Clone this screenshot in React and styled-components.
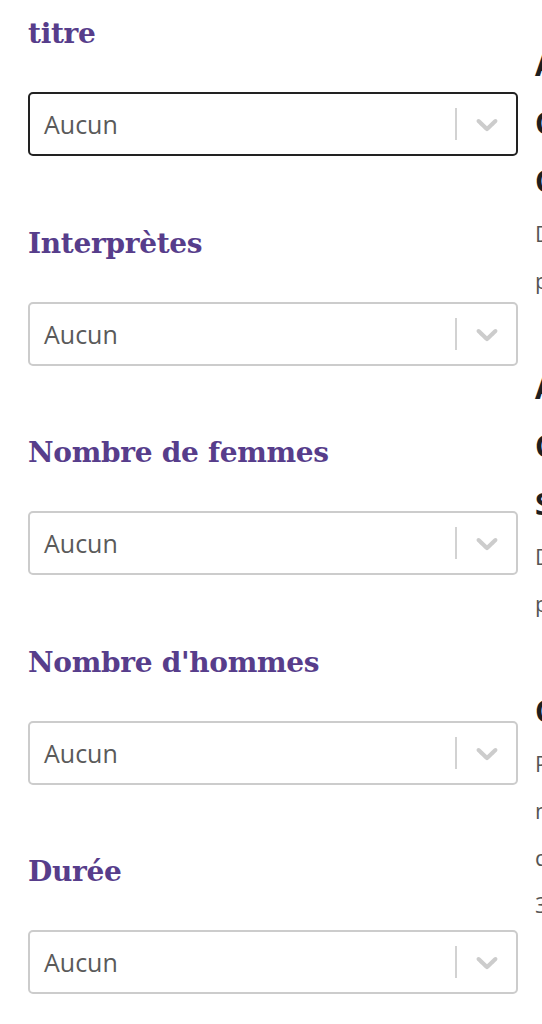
import styled, { createGlobalStyle } from 'styled-components'

const filters = [
	{ id: 'titre', label: 'titre', focused: true },
	{ id: 'interpretes', label: 'Interprètes' },
	{ id: 'femmes', label: 'Nombre de femmes' },
	{ id: 'hommes', label: "Nombre d'hommes" },
	{ id: 'duree', label: 'Durée' },
]

const results = [
	{
		id: 1,
		title: ['Adieu', 'Cendrillon', 'Comédie'],
		text: ['De Jean Dupont', 'pour trois comédiens'],
	},
	{
		id: 2,
		title: ['Appartement', 'Charmant', 'Sans vue'],
		text: ['De Marie Leroy', 'pour deux comédiennes'],
	},
	{
		id: 3,
		title: ['Coup de théâtre'],
		text: ['Pièce en un acte,', 'mise en scène', 'de la compagnie', '3 femmes, 2 hommes'],
	},
]

const Chevron = () => (
	<svg width="36" height="36" viewBox="0 0 20 20" aria-hidden="true">
		<path
			fill="currentColor"
			d="M4.516 7.548c0.436-0.446 1.043-0.481 1.576 0l3.908 3.747 3.908-3.747c0.533-0.481 1.141-0.446 1.574 0 0.436 0.445 0.408 1.197 0 1.615-0.406 0.418-4.695 4.502-4.695 4.502-0.217 0.223-0.502 0.335-0.787 0.335s-0.57-0.112-0.789-0.335c0 0-4.287-4.084-4.695-4.502s-0.436-1.17 0-1.615z"
		/>
	</svg>
)

const App = () => {
	return (
		<>
			<GlobalStyle />
			<Page>
				<Filters>
					{filters.map((f) => (
						<Field key={f.id}>
							<Label>{f.label}</Label>
							<Select $focused={f.focused}>
								<Value>Aucun</Value>
								<Separator />
								<Indicator>
									<Chevron />
								</Indicator>
							</Select>
						</Field>
					))}
				</Filters>
				<Results>
					{results.map((r) => (
						<Card key={r.id}>
							<CardTitle>
								{r.title.map((line) => (
									<Line key={line}>{line}</Line>
								))}
							</CardTitle>
							<CardText>
								{r.text.map((line) => (
									<Line key={line}>{line}</Line>
								))}
							</CardText>
						</Card>
					))}
				</Results>
			</Page>
		</>
	)
}

export default App

const GlobalStyle = createGlobalStyle`
	html, body {
		margin: 0;
		padding: 0;
		background: #fff;
		overflow: hidden;
	}
	body {
		font-family: 'Open Sans', 'Liberation Sans', sans-serif;
	}
`

const Page = styled.div`
	display: flex;
	gap: 17px;
	width: 900px;
	padding: 12px 0 0 28px;
`

const Filters = styled.div`
	display: flex;
	flex-direction: column;
	width: 490px;
	flex-shrink: 0;
`

const Field = styled.div`
	display: flex;
	flex-direction: column;
	margin-bottom: 65.5px;
`

const Label = styled.div`
	font-family: 'DejaVu Serif', 'Liberation Serif', serif;
	font-weight: 700;
	font-size: 28px;
	line-height: 44px;
	letter-spacing: -0.3px;
	color: #573d8b;
	margin-bottom: 36px;
`

const Select = styled.div`
	display: flex;
	align-items: center;
	height: 64px;
	box-sizing: border-box;
	border: 2px solid ${(p) => (p.$focused ? '#222' : '#cccccc')};
	border-radius: 5px;
	background: #fff;
`

const Value = styled.div`
	flex: 1;
	padding-left: 14px;
	font-family: 'Open Sans', sans-serif;
	font-size: 25px;
	color: #5a5a5a;
`

const Separator = styled.span`
	width: 2px;
	height: 32px;
	background: #d2d2d2;
`

const Indicator = styled.div`
	display: flex;
	align-items: center;
	justify-content: center;
	width: 59px;
	color: #cccccc;
`

const Results = styled.div`
	display: flex;
	flex-direction: column;
	padding-top: 24px;
	width: 340px;
	flex-shrink: 0;
`

const Card = styled.div`
	margin-bottom: 55px;
`

const CardTitle = styled.div`
	font-family: 'Open Sans', sans-serif;
	font-weight: 700;
	font-size: 30px;
	line-height: 58px;
	color: #1e1e1e;
`

const CardText = styled.div`
	font-family: 'Open Sans', sans-serif;
	font-size: 22px;
	line-height: 47px;
	color: #555;
`

const Line = styled.span`
	display: block;
	white-space: nowrap;
`
